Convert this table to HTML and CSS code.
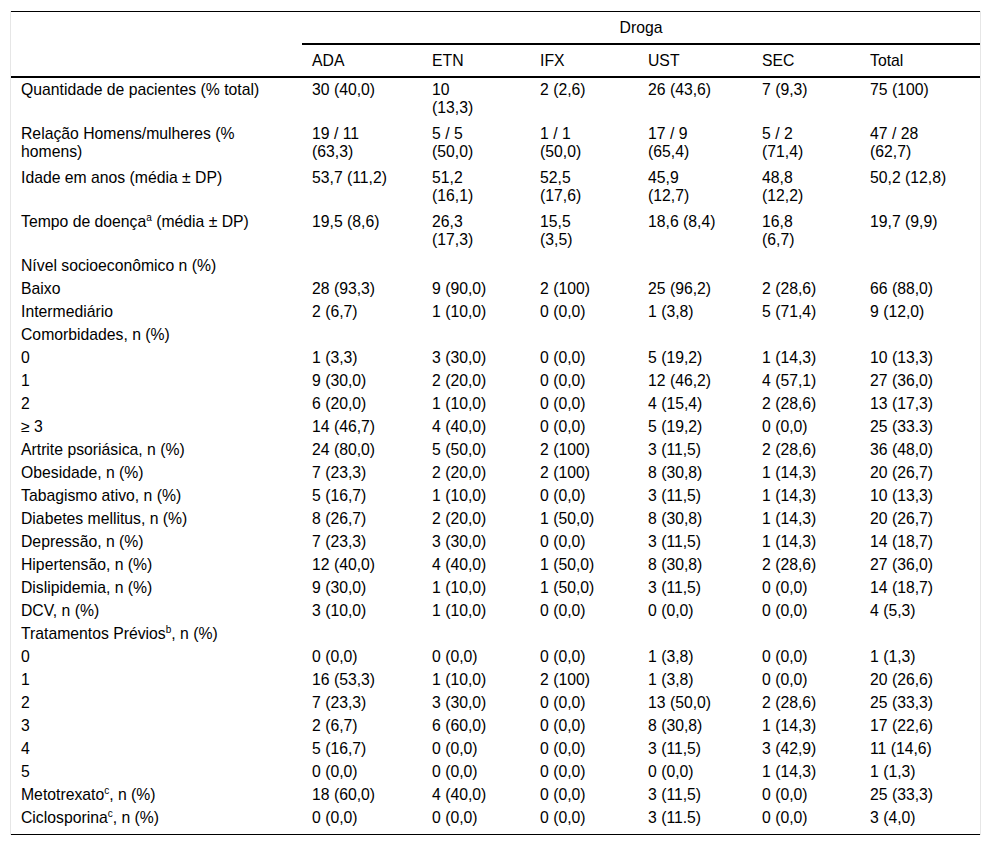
FILE: index.html
```html
<!DOCTYPE html>
<html lang="pt">
<head>
<meta charset="utf-8">
<title>Tabela</title>
<link rel="stylesheet" href="styles.css">
</head>
<body>
<div class="wrap">
<table class="data">
  <colgroup>
    <col class="c-label">
    <col class="c-wide">
    <col class="c-mid">
    <col class="c-mid">
    <col class="c-ust">
    <col class="c-mid">
    <col class="c-wide">
  </colgroup>
  <thead>
    <tr class="h1">
      <th rowspan="2" class="corner"></th>
      <th colspan="6" class="group">Droga</th>
    </tr>
    <tr class="h2">
      <th>ADA</th>
      <th>ETN</th>
      <th>IFX</th>
      <th>UST</th>
      <th>SEC</th>
      <th>Total</th>
    </tr>
  </thead>
  <tbody>
    <tr class="two first">
      <td>Quantidade de pacientes (% total)</td>
      <td>30 (40,0)</td>
      <td>10<br>(13,3)</td>
      <td>2 (2,6)</td>
      <td>26 (43,6)</td>
      <td>7 (9,3)</td>
      <td>75 (100)</td>
    </tr>
    <tr class="two">
      <td>Relação Homens/mulheres (%<br>homens)</td>
      <td>19 / 11<br>(63,3)</td>
      <td>5 / 5<br>(50,0)</td>
      <td>1 / 1<br>(50,0)</td>
      <td>17 / 9<br>(65,4)</td>
      <td>5 / 2<br>(71,4)</td>
      <td>47 / 28<br>(62,7)</td>
    </tr>
    <tr class="two">
      <td>Idade em anos (média ± DP)</td>
      <td>53,7 (11,2)</td>
      <td>51,2<br>(16,1)</td>
      <td>52,5<br>(17,6)</td>
      <td>45,9<br>(12,7)</td>
      <td>48,8<br>(12,2)</td>
      <td>50,2 (12,8)</td>
    </tr>
    <tr class="two">
      <td>Tempo de doença<sup>a</sup> (média ± DP)</td>
      <td>19,5 (8,6)</td>
      <td>26,3<br>(17,3)</td>
      <td>15,5<br>(3,5)</td>
      <td>18,6 (8,4)</td>
      <td>16,8<br>(6,7)</td>
      <td>19,7 (9,9)</td>
    </tr>
    <tr>
      <td>Nível socioeconômico n (%)</td>
      <td></td><td></td><td></td><td></td><td></td><td></td>
    </tr>
    <tr>
      <td>Baixo</td>
      <td>28 (93,3)</td><td>9 (90,0)</td><td>2 (100)</td><td>25 (96,2)</td><td>2 (28,6)</td><td>66 (88,0)</td>
    </tr>
    <tr>
      <td>Intermediário</td>
      <td>2 (6,7)</td><td>1 (10,0)</td><td>0 (0,0)</td><td>1 (3,8)</td><td>5 (71,4)</td><td>9 (12,0)</td>
    </tr>
    <tr>
      <td>Comorbidades, n (%)</td>
      <td></td><td></td><td></td><td></td><td></td><td></td>
    </tr>
    <tr>
      <td>0</td>
      <td>1 (3,3)</td><td>3 (30,0)</td><td>0 (0,0)</td><td>5 (19,2)</td><td>1 (14,3)</td><td>10 (13,3)</td>
    </tr>
    <tr>
      <td>1</td>
      <td>9 (30,0)</td><td>2 (20,0)</td><td>0 (0,0)</td><td>12 (46,2)</td><td>4 (57,1)</td><td>27 (36,0)</td>
    </tr>
    <tr>
      <td>2</td>
      <td>6 (20,0)</td><td>1 (10,0)</td><td>0 (0,0)</td><td>4 (15,4)</td><td>2 (28,6)</td><td>13 (17,3)</td>
    </tr>
    <tr>
      <td>≥ 3</td>
      <td>14 (46,7)</td><td>4 (40,0)</td><td>0 (0,0)</td><td>5 (19,2)</td><td>0 (0,0)</td><td>25 (33.3)</td>
    </tr>
    <tr>
      <td>Artrite psoriásica, n (%)</td>
      <td>24 (80,0)</td><td>5 (50,0)</td><td>2 (100)</td><td>3 (11,5)</td><td>2 (28,6)</td><td>36 (48,0)</td>
    </tr>
    <tr>
      <td>Obesidade, n (%)</td>
      <td>7 (23,3)</td><td>2 (20,0)</td><td>2 (100)</td><td>8 (30,8)</td><td>1 (14,3)</td><td>20 (26,7)</td>
    </tr>
    <tr>
      <td>Tabagismo ativo, n (%)</td>
      <td>5 (16,7)</td><td>1 (10,0)</td><td>0 (0,0)</td><td>3 (11,5)</td><td>1 (14,3)</td><td>10 (13,3)</td>
    </tr>
    <tr>
      <td>Diabetes mellitus, n (%)</td>
      <td>8 (26,7)</td><td>2 (20,0)</td><td>1 (50,0)</td><td>8 (30,8)</td><td>1 (14,3)</td><td>20 (26,7)</td>
    </tr>
    <tr>
      <td>Depressão, n (%)</td>
      <td>7 (23,3)</td><td>3 (30,0)</td><td>0 (0,0)</td><td>3 (11,5)</td><td>1 (14,3)</td><td>14 (18,7)</td>
    </tr>
    <tr>
      <td>Hipertensão, n (%)</td>
      <td>12 (40,0)</td><td>4 (40,0)</td><td>1 (50,0)</td><td>8 (30,8)</td><td>2 (28,6)</td><td>27 (36,0)</td>
    </tr>
    <tr>
      <td>Dislipidemia, n (%)</td>
      <td>9 (30,0)</td><td>1 (10,0)</td><td>1 (50,0)</td><td>3 (11,5)</td><td>0 (0,0)</td><td>14 (18,7)</td>
    </tr>
    <tr>
      <td>DCV, n (%)</td>
      <td>3 (10,0)</td><td>1 (10,0)</td><td>0 (0,0)</td><td>0 (0,0)</td><td>0 (0,0)</td><td>4 (5,3)</td>
    </tr>
    <tr>
      <td>Tratamentos Prévios<sup>b</sup>, n (%)</td>
      <td></td><td></td><td></td><td></td><td></td><td></td>
    </tr>
    <tr>
      <td>0</td>
      <td>0 (0,0)</td><td>0 (0,0)</td><td>0 (0,0)</td><td>1 (3,8)</td><td>0 (0,0)</td><td>1 (1,3)</td>
    </tr>
    <tr>
      <td>1</td>
      <td>16 (53,3)</td><td>1 (10,0)</td><td>2 (100)</td><td>1 (3,8)</td><td>0 (0,0)</td><td>20 (26,6)</td>
    </tr>
    <tr>
      <td>2</td>
      <td>7 (23,3)</td><td>3 (30,0)</td><td>0 (0,0)</td><td>13 (50,0)</td><td>2 (28,6)</td><td>25 (33,3)</td>
    </tr>
    <tr>
      <td>3</td>
      <td>2 (6,7)</td><td>6 (60,0)</td><td>0 (0,0)</td><td>8 (30,8)</td><td>1 (14,3)</td><td>17 (22,6)</td>
    </tr>
    <tr>
      <td>4</td>
      <td>5 (16,7)</td><td>0 (0,0)</td><td>0 (0,0)</td><td>3 (11,5)</td><td>3 (42,9)</td><td>11 (14,6)</td>
    </tr>
    <tr>
      <td>5</td>
      <td>0 (0,0)</td><td>0 (0,0)</td><td>0 (0,0)</td><td>0 (0,0)</td><td>1 (14,3)</td><td>1 (1,3)</td>
    </tr>
    <tr>
      <td>Metotrexato<sup>c</sup>, n (%)</td>
      <td>18 (60,0)</td><td>4 (40,0)</td><td>0 (0,0)</td><td>3 (11,5)</td><td>0 (0,0)</td><td>25 (33,3)</td>
    </tr>
    <tr class="last">
      <td>Ciclosporina<sup>c</sup>, n (%)</td>
      <td>0 (0,0)</td><td>0 (0,0)</td><td>0 (0,0)</td><td>3 (11.5)</td><td>0 (0,0)</td><td>3 (4,0)</td>
    </tr>
  </tbody>
</table>
</div>
</body>
</html>
```

FILE: styles.css
```css
html, body {
  margin: 0;
  padding: 0;
  background: #ffffff;
}

body {
  font-family: "Liberation Sans", Arial, Helvetica, sans-serif;
  font-size: 15.75px;
  color: #000000;
}

.wrap {
  padding: 11px 0 0 10px;
}

.data {
  width: 971px;
  table-layout: fixed;
  border-collapse: separate;
  border-spacing: 0;
  border-left: 1px solid #e6e6e6;
  border-right: 1px solid #e6e6e6;
}

.c-label { width: 291px; }
.c-wide { width: 120px; }
.c-mid { width: 108px; }
.c-ust { width: 114px; }

.data th,
.data td {
  text-align: left;
  vertical-align: top;
  font-weight: normal;
  line-height: 18px;
  padding: 3px 10px 2px 10px;
  white-space: nowrap;
}

.data thead th {
  padding-top: 7px;
  padding-bottom: 6px;
}

.data .h1 th {
  border-top: 1px solid #000;
}

.data .group {
  text-align: center;
  border-bottom: 2px solid #000;
}

.data .corner,
.data .h2 th {
  border-bottom: 2px solid #000;
}

.data tr.two td {
  padding-bottom: 5px;
}

.data tr.first td {
  padding-top: 3px;
  padding-bottom: 5px;
}

.data tr.last td {
  padding-bottom: 7px;
  border-bottom: 1px solid #000;
}

.data sup {
  font-size: 10px;
  line-height: 0;
  vertical-align: 6px;
}
```
